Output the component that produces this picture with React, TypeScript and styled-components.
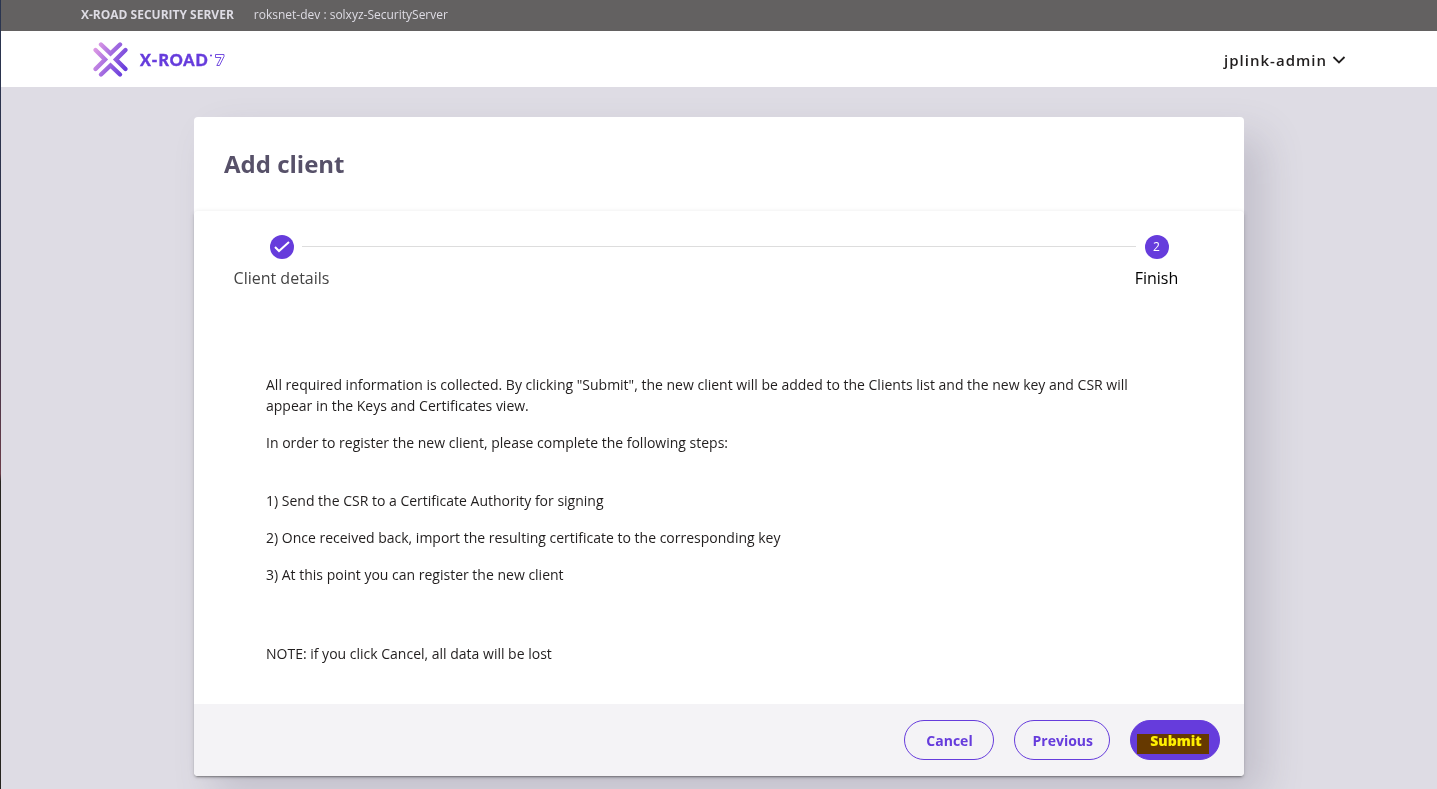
import React from "react";
import styled, { createGlobalStyle } from "styled-components";

const purple = "#663cdc";

const GlobalStyle = createGlobalStyle`
  *, *::before, *::after { box-sizing: border-box; }
  body {
    margin: 0;
    background: #dedce4;
    font-family: "Open Sans", "Noto Sans", sans-serif;
    color: #211e1e;
  }
  h1, p, ol { margin: 0; padding: 0; }
`;

const Page = styled.div`
  display: flex;
  flex-direction: column;
  min-height: 100vh;
  border-left: 1px solid;
  border-image: linear-gradient(#2a3550 0%, #2f3148 38%, #6b3c48 60%, #26241f 61%, #26241f 100%) 1;
  overflow: hidden;
`;

const ServerBar = styled.div`
  display: flex;
  align-items: center;
  gap: 20px;
  height: 31px;
  padding: 0 80px 2px;
  background: #636161;
  color: #dedce4;
  font-size: 12px;
  line-height: 16px;
`;

const ServerTitle = styled.strong`
  font-weight: 700;
`;

const AppHeader = styled.header`
  display: flex;
  align-items: center;
  justify-content: space-between;
  height: 56px;
  padding: 1px 91px 0;
  background: #ffffff;
`;

const LogoLink = styled.a`
  display: block;
  height: 36px;
  svg { display: block; }
`;

const UserButton = styled.button`
  display: flex;
  align-items: center;
  gap: 5px;
  padding: 0;
  border: 0;
  background: none;
  color: #211e1e;
  font: 600 15px/20px "Open Sans", sans-serif;
  letter-spacing: 1px;
  cursor: pointer;
`;

const Card = styled.main`
  width: 100%;
  max-width: 1050px;
  margin: 30px auto 13px;
  border-radius: 4px;
  background: #ffffff;
  box-shadow: 20px 20px 40px 0 rgba(87, 81, 105, 0.2);
`;

const CardHeader = styled.div`
  padding: 30px 30px 31px;
`;

const Title = styled.h1`
  color: #575169;
  font-size: 24px;
  line-height: 33px;
  font-weight: 700;
`;

const Wizard = styled.section`
  border-radius: 4px;
  overflow: hidden;
  box-shadow: 0 3px 1px -2px rgba(0, 0, 0, 0.2), 0 2px 2px 0 rgba(0, 0, 0, 0.14),
    0 1px 5px 0 rgba(0, 0, 0, 0.12);
`;

const Steps = styled.ol`
  display: flex;
  list-style: none;
  padding: 24px 0;
`;

const Step = styled.li`
  display: flex;
  flex-direction: column;
  align-items: center;
  gap: 8px;
  width: 175px;
  font-size: 16px;
  line-height: 22px;
`;

const StepLabel = styled.span<{ $active?: boolean }>`
  color: ${(p) => (p.$active ? "#000000" : "#444444")};
`;

const StepMark = styled.span`
  display: flex;
  align-items: center;
  justify-content: center;
  width: 24px;
  height: 24px;
  border-radius: 50%;
  background: ${purple};
  color: #ffffff;
  font-size: 12px;
  line-height: 16px;
`;

const StepLine = styled.li`
  flex: 1;
  height: 1px;
  margin: 11px -67px 0;
  background: #dddddd;
`;

const Body = styled.div`
  padding: 61px 72px 40px;
  color: #211e1e;
  font-size: 14px;
  line-height: 21px;
`;

const Paragraph = styled.p`
  max-width: 880px;
  margin-bottom: 16px;
`;

const StepsToTake = styled.div`
  padding: 21px 0 42px;
`;

const Footer = styled.footer`
  display: flex;
  justify-content: flex-end;
  gap: 20px;
  padding: 16px 24px;
  background: #f4f3f6;
`;

const Button = styled.button<{ $filled?: boolean }>`
  position: relative;
  height: 40px;
  min-width: 90px;
  padding: 2px 16px 0 18px;
  border: 1px solid ${purple};
  border-radius: 20px;
  background: ${(p) => (p.$filled ? purple : "transparent")};
  color: ${(p) => (p.$filled ? "#ffffff" : purple)};
  font: ${(p) => (p.$filled ? 800 : 700)} 14px/20px "Open Sans", sans-serif;
  cursor: pointer;
`;

const Highlight = styled.span`
  position: absolute;
  inset: 13px 10px 5px 6px;
  background: #fff000;
  mix-blend-mode: multiply;
`;

const Logo = () => (
  <svg width="134" height="36" viewBox="0 0 134 36" role="img" aria-label="X-Road 7">
    <defs>
      <linearGradient id="mark" gradientUnits="userSpaceOnUse" x1="1" y1="10" x2="34" y2="26">
        <stop offset="0" stopColor="#dd99e4" />
        <stop offset="1" stopColor={purple} />
      </linearGradient>
    </defs>
    <g fill="none" stroke="url(#mark)" strokeWidth="4.4" strokeLinecap="round" strokeLinejoin="miter">
      <path d="M9 2.5 L18.5 11.5 L28 2.5" />
      <path d="M3.5 8 L13 17.5 L3.5 27" />
      <path d="M33.5 8 L24 17.5 L33.5 27" />
      <path d="M9 32.5 L18.5 23.5 L28 32.5" />
    </g>
    <text x="48" y="23.5" fill={purple} stroke={purple} strokeWidth="0.4" fontFamily="Lato, sans-serif" fontSize="16" fontWeight="900" letterSpacing="1">
      X-ROAD
    </text>
    <circle cx="119" cy="13.5" r="1" fill={purple} />
    <path d="M123.5 12.5 H132 V14.5 L127.5 23.5 H124.8 L129 15.5 H123.5 Z" fill="none" stroke={purple} strokeWidth="0.9" strokeLinejoin="round" />
  </svg>
);

export default function App() {
  return (
    <>
      <GlobalStyle />
      <Page>
        <ServerBar>
          <ServerTitle>X-ROAD SECURITY SERVER</ServerTitle>
          <span>roksnet-dev : solxyz-SecurityServer</span>
        </ServerBar>
        <AppHeader>
          <LogoLink href="#home">
            <Logo />
          </LogoLink>
          <UserButton type="button">
            jplink-admin
            <svg width="14" height="8" viewBox="0 0 14 8" aria-hidden="true">
              <path d="M1.5 1 L7 6.5 L12.5 1" fill="none" stroke="#211e1e" strokeWidth="1.8" />
            </svg>
          </UserButton>
        </AppHeader>
        <Card>
          <CardHeader>
            <Title>Add client</Title>
          </CardHeader>
          <Wizard>
            <Steps>
              <Step>
                <StepMark>
                  <svg width="16" height="12" viewBox="0 0 16 12" aria-label="Done">
                    <path d="M1 6 L5 10 L15 1" fill="none" stroke="#ffffff" strokeWidth="2" />
                  </svg>
                </StepMark>
                <StepLabel>Client details</StepLabel>
              </Step>
              <StepLine aria-hidden="true" />
              <Step aria-current="step">
                <StepMark>2</StepMark>
                <StepLabel $active>Finish</StepLabel>
              </Step>
            </Steps>
            <Body>
              <Paragraph>
                All required information is collected. By clicking "Submit", the new client will be added to the
                Clients list and the new key and CSR will appear in the Keys and Certificates view.
              </Paragraph>
              <Paragraph>In order to register the new client, please complete the following steps:</Paragraph>
              <StepsToTake>
                <Paragraph>1) Send the CSR to a Certificate Authority for signing</Paragraph>
                <Paragraph>2) Once received back, import the resulting certificate to the corresponding key</Paragraph>
                <Paragraph>3) At this point you can register the new client</Paragraph>
              </StepsToTake>
              <p>NOTE: if you click Cancel, all data will be lost</p>
            </Body>
            <Footer>
              <Button type="button">Cancel</Button>
              <Button type="button">Previous</Button>
              <Button type="button" $filled>
                Submit
                <Highlight />
              </Button>
            </Footer>
          </Wizard>
        </Card>
      </Page>
    </>
  );
}
